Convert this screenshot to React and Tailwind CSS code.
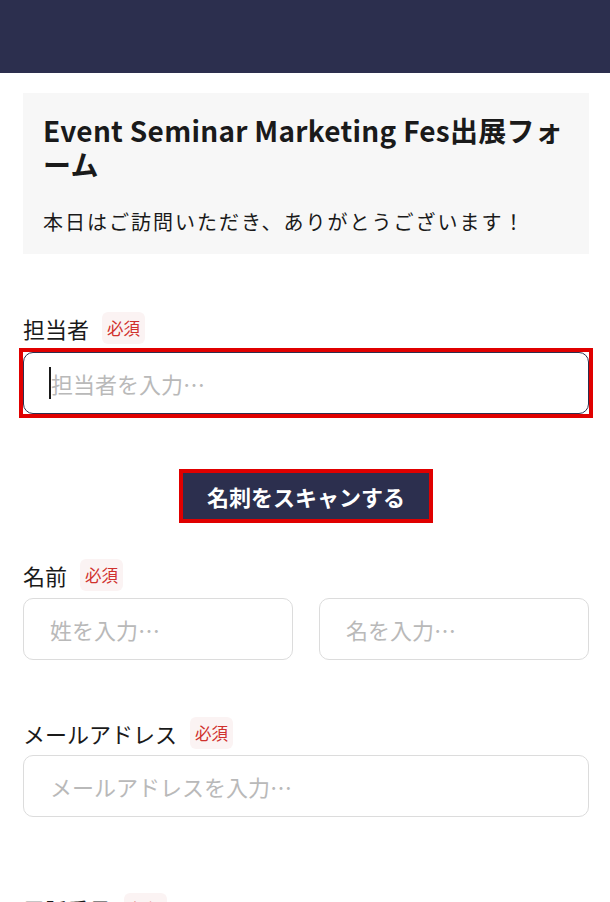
import React from "react";

const font = { fontFamily: '"Noto Sans CJK JP", "Noto Sans", sans-serif' };

function Badge() {
  return (
    <span className="inline-flex h-[32px] items-center rounded-[6px] bg-[#fbf3f3] px-[5px] text-[16.5px] leading-none text-[#d0312d]">
      必須
    </span>
  );
}

function Label({ children }) {
  return (
    <div className="flex items-center gap-[13px]">
      <span className="text-[22px] leading-[32px] text-[#1a1a1a]">{children}</span>
      <Badge />
    </div>
  );
}

function Field({ placeholder }) {
  return (
    <input
      type="text"
      placeholder={placeholder}
      className="h-[62px] w-full rounded-[10px] border border-[#dcdcdc] bg-white px-[26px] text-[22px] text-[#1a1a1a] outline-none placeholder:text-[#b9b9b9]"
      style={font}
    />
  );
}

export default function App() {
  return (
    <div className="min-h-[902px] bg-white" style={font}>
      <header className="h-[73px] bg-[#2c2f4e]" />
      <main className="pl-[23px] pr-[21px]">
        <section className="mt-[20px] bg-[#f7f7f7] px-[20px] pt-[20px] pb-[17px]">
          <h1 className="text-[28px] font-bold leading-[34px] tracking-[0.01em] text-[#1a1a1a]">
            Event Seminar Marketing Fes出展フォーム
          </h1>
          <p className="mt-[26px] text-[20px] leading-[30px] tracking-[0.1em] text-[#1a1a1a]">
            本日はご訪問いただき、ありがとうございます！
          </p>
        </section>

        <div className="mt-[58px]">
          <Label>担当者</Label>
          <div className="-mx-[4px] mt-[4px] border-[4px] border-[#e00000]">
            <div className="relative">
              <input
                type="text"
                placeholder="担当者を入力…"
                className="h-[62px] w-full rounded-[10px] border-[1.5px] border-[#2c2f4e] bg-white pl-[27px] pr-[25px] text-[22px] text-[#1a1a1a] outline-none placeholder:text-[#b9b9b9]"
                style={font}
              />
              <span className="pointer-events-none absolute left-[26px] top-[15px] h-[32px] w-[2px] bg-[#1a1a1a]" />
            </div>
          </div>
        </div>

        <div className="mt-[51px] flex justify-center">
          <button
            type="button"
            className="h-[54px] w-[254px] border-[4px] border-[#e00000] bg-[#2c2f4e] text-[22px] font-bold text-white"
            style={font}
          >
            名刺をスキャンする
          </button>
        </div>

        <div className="mt-[36px]">
          <Label>名前</Label>
          <div className="mt-[7px] grid grid-cols-2 gap-[26px]">
            <Field placeholder="姓を入力…" />
            <Field placeholder="名を入力…" />
          </div>
        </div>

        <div className="mt-[57px]">
          <Label>メールアドレス</Label>
          <div className="mt-[6px]">
            <Field placeholder="メールアドレスを入力…" />
          </div>
        </div>

        <div className="mt-[76px]">
          <Label>電話番号</Label>
          <div className="mt-[6px]">
            <Field placeholder="電話番号を入力…" />
          </div>
        </div>
      </main>
    </div>
  );
}
